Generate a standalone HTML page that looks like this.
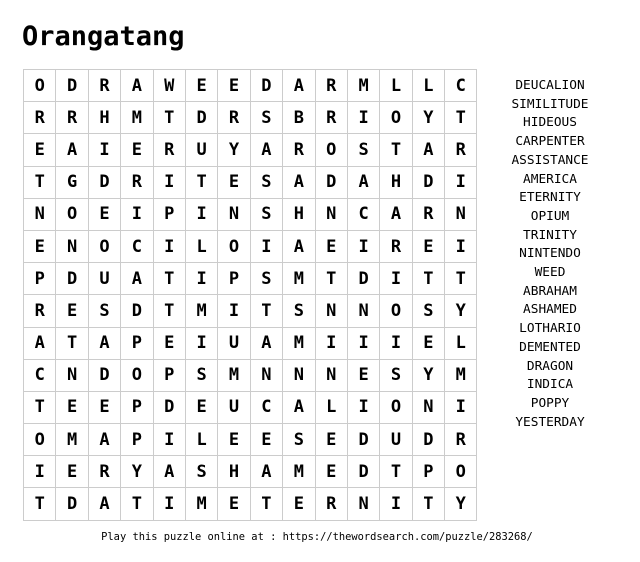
<!DOCTYPE html><html><head><style>
body{margin:0;width:640px;height:562px;background:#fff;font-family:"DejaVu Sans Mono",monospace;color:#000;position:relative;overflow:hidden}
h1{position:absolute;left:22px;top:21px;margin:0;font-size:27px;font-weight:bold}
table{position:absolute;left:23px;top:69px;border-collapse:collapse}
td{width:31.4px;height:31.2px;border:1px solid #ccc;text-align:center;font-weight:bold;font-size:17px;padding:0}
.w{position:absolute;left:500px;top:77px;width:100px;text-align:center;font-size:12.8px;line-height:18.7px}
.f{position:absolute;left:0;width:634px;top:531px;text-align:center;font-size:10.4px}
</style></head><body>
<h1>Orangatang</h1>
<table>
<tr><td>O</td><td>D</td><td>R</td><td>A</td><td>W</td><td>E</td><td>E</td><td>D</td><td>A</td><td>R</td><td>M</td><td>L</td><td>L</td><td>C</td></tr>
<tr><td>R</td><td>R</td><td>H</td><td>M</td><td>T</td><td>D</td><td>R</td><td>S</td><td>B</td><td>R</td><td>I</td><td>O</td><td>Y</td><td>T</td></tr>
<tr><td>E</td><td>A</td><td>I</td><td>E</td><td>R</td><td>U</td><td>Y</td><td>A</td><td>R</td><td>O</td><td>S</td><td>T</td><td>A</td><td>R</td></tr>
<tr><td>T</td><td>G</td><td>D</td><td>R</td><td>I</td><td>T</td><td>E</td><td>S</td><td>A</td><td>D</td><td>A</td><td>H</td><td>D</td><td>I</td></tr>
<tr><td>N</td><td>O</td><td>E</td><td>I</td><td>P</td><td>I</td><td>N</td><td>S</td><td>H</td><td>N</td><td>C</td><td>A</td><td>R</td><td>N</td></tr>
<tr><td>E</td><td>N</td><td>O</td><td>C</td><td>I</td><td>L</td><td>O</td><td>I</td><td>A</td><td>E</td><td>I</td><td>R</td><td>E</td><td>I</td></tr>
<tr><td>P</td><td>D</td><td>U</td><td>A</td><td>T</td><td>I</td><td>P</td><td>S</td><td>M</td><td>T</td><td>D</td><td>I</td><td>T</td><td>T</td></tr>
<tr><td>R</td><td>E</td><td>S</td><td>D</td><td>T</td><td>M</td><td>I</td><td>T</td><td>S</td><td>N</td><td>N</td><td>O</td><td>S</td><td>Y</td></tr>
<tr><td>A</td><td>T</td><td>A</td><td>P</td><td>E</td><td>I</td><td>U</td><td>A</td><td>M</td><td>I</td><td>I</td><td>I</td><td>E</td><td>L</td></tr>
<tr><td>C</td><td>N</td><td>D</td><td>O</td><td>P</td><td>S</td><td>M</td><td>N</td><td>N</td><td>N</td><td>E</td><td>S</td><td>Y</td><td>M</td></tr>
<tr><td>T</td><td>E</td><td>E</td><td>P</td><td>D</td><td>E</td><td>U</td><td>C</td><td>A</td><td>L</td><td>I</td><td>O</td><td>N</td><td>I</td></tr>
<tr><td>O</td><td>M</td><td>A</td><td>P</td><td>I</td><td>L</td><td>E</td><td>E</td><td>S</td><td>E</td><td>D</td><td>U</td><td>D</td><td>R</td></tr>
<tr><td>I</td><td>E</td><td>R</td><td>Y</td><td>A</td><td>S</td><td>H</td><td>A</td><td>M</td><td>E</td><td>D</td><td>T</td><td>P</td><td>O</td></tr>
<tr><td>T</td><td>D</td><td>A</td><td>T</td><td>I</td><td>M</td><td>E</td><td>T</td><td>E</td><td>R</td><td>N</td><td>I</td><td>T</td><td>Y</td></tr>
</table>
<div class="w">DEUCALION<br>SIMILITUDE<br>HIDEOUS<br>CARPENTER<br>ASSISTANCE<br>AMERICA<br>ETERNITY<br>OPIUM<br>TRINITY<br>NINTENDO<br>WEED<br>ABRAHAM<br>ASHAMED<br>LOTHARIO<br>DEMENTED<br>DRAGON<br>INDICA<br>POPPY<br>YESTERDAY</div>
<div class="f">Play this puzzle online at : https://thewordsearch.com/puzzle/283268/</div>
</body></html>
